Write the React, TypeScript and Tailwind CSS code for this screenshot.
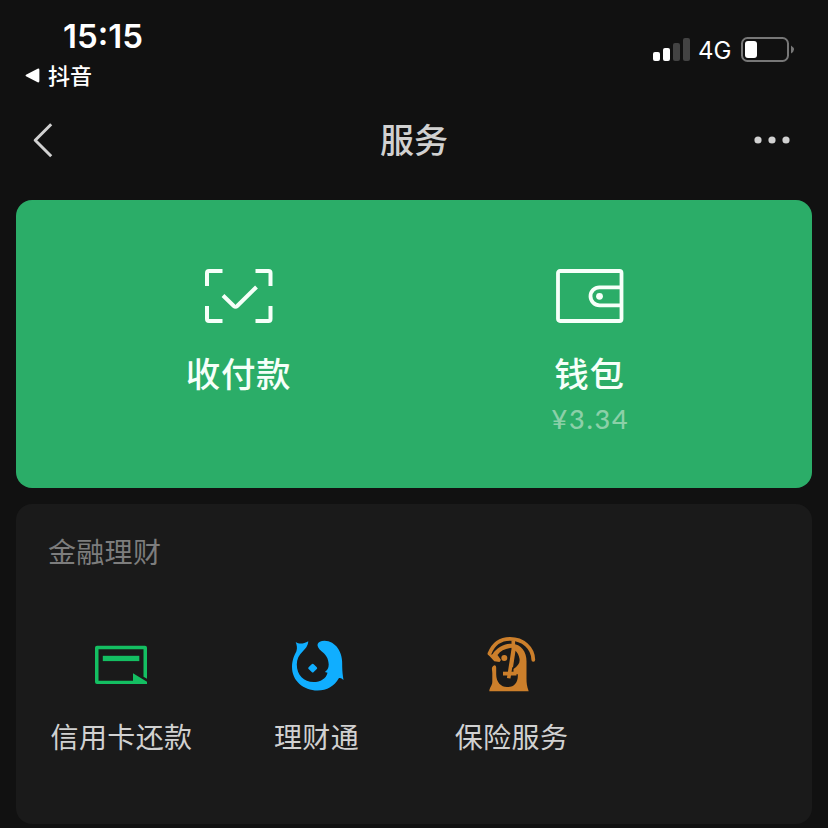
import type { ReactNode } from 'react';

const cjk = "font-['Noto_Sans_CJK_SC',sans-serif]";

function StatusBar() {
  return (
    <div className="flex h-24 items-start justify-between">
      <div className="flex flex-col pl-6 pt-[18px]">
        <span className="flex pl-[39px] font-['Inter',sans-serif] text-[33px] font-semibold leading-9 text-white">
          15<span className="-mt-[3px] mb-[3px]">:</span>15
        </span>
        <div className="mt-[8px] flex h-7 items-center gap-2 pl-[1px]">
          <svg width="15" height="16" viewBox="0 0.5 15 16" fill="#fff">
            <path d="M1 7.2 12.6 1.2Q14.4.6 14.4 2.4V13.6Q14.4 15.4 12.6 14.8L1 8.8Q0 8 1 7.2Z" />
          </svg>
          <span className="-mt-1 text-[22px] font-medium leading-7 text-white">抖音</span>
        </div>
      </div>
      <div className="mt-[36px] flex h-7 items-center pr-[33px]">
        <svg width="38" height="24" viewBox="0 0 38 24">
          <rect x="0" y="14" width="7" height="9" rx="2" fill="#fff" />
          <rect x="10" y="10" width="7" height="13" rx="2" fill="#fff" />
          <rect x="20" y="5" width="7" height="18" rx="2" fill="#434343" />
          <rect x="30" y="0" width="7" height="23" rx="2" fill="#434343" />
        </svg>
        <span className="ml-[7px] mt-0.5 w-[34px] whitespace-nowrap font-['Inter',sans-serif] text-[24px] font-normal leading-7 text-white">
          4G
        </span>
        <svg className="ml-[9px]" width="54" height="26" viewBox="0 0 54 26">
          <rect x="1" y="1" width="46" height="23" rx="5.5" fill="none" stroke="#777" strokeWidth="2" />
          <rect x="4" y="4" width="12" height="17" rx="3" fill="#fff" />
          <path d="M50 8.5Q53 10.5 53 12.5T50 16.5Z" fill="#777" />
        </svg>
      </div>
    </div>
  );
}

function NavBar() {
  return (
    <div className="grid h-[88px] grid-cols-3 items-center text-[#d1d1d1]">
      <svg className="ml-8" width="22" height="36" viewBox="0 0 22 36" fill="none" stroke="currentColor" strokeWidth="3">
        <path d="M19.2 2.2 3.2 18.2 19.2 34.2" strokeLinejoin="round" />
      </svg>
      <h1 className="-mt-[3px] text-center text-[34px] font-medium leading-[48px]">服务</h1>
      <svg className="mr-[37px] justify-self-end" width="38" height="8" viewBox="0 0 38 8" fill="currentColor">
        <circle cx="5" cy="4" r="3.6" />
        <circle cx="19" cy="4" r="3.6" />
        <circle cx="33" cy="4" r="3.6" />
      </svg>
    </div>
  );
}

function PayIcon() {
  return (
    <svg width="68" height="56" viewBox="0.5 0 68 56" fill="none" stroke="#f6fff9" strokeWidth="4">
      <path d="M2.5 18V5Q2.5 3 4.5 3H18M51 3H64Q66 3 66 5V18M66 38V51Q66 53 64 53H51M18 53H4.5Q2.5 53 2.5 51V38" />
      <path d="M18.5 27.5 29.3 38Q31 39.5 32.7 38L52 19" />
    </svg>
  );
}

function WalletIcon() {
  return (
    <svg width="68" height="56" viewBox="0.5 0 68 56" fill="none" stroke="#f6fff9" strokeWidth="3.8">
      <rect x="2.5" y="3" width="63.5" height="50" rx="2" />
      <path d="M65 19.3H44a9 9 0 0 0 0 18H65" />
      <circle cx="44" cy="28.3" r="3.4" fill="#f6fff9" stroke="none" />
    </svg>
  );
}

function CardIcon() {
  return (
    <svg width="56" height="60" viewBox="0.5 0.2 56 60" fill="#14bf62">
      <path fillRule="evenodd" d="M3.5 10H51.5Q53.5 10 53.5 12V43L50 41V13.5H5V45H39.5V37.5L53.5 46V48.3H3.5Q1.5 48.3 1.5 46.3V12Q1.5 10 3.5 10Z" />
      <rect x="9.3" y="20" width="36.5" height="5.3" />
    </svg>
  );
}

function FishIcon() {
  return (
    <svg width="56" height="60" viewBox="0.5 0 56 60" fill="#10aeff">
      <path d="M7.2 6C11 8.6 15 7.8 19.8 5.2C19.5 10 16.8 12.7 14.4 15.3C10.3 19.2 8.3 23.2 8.3 28.5C8.3 39 15.5 46 25 46C32 46 37.8 42.5 39 36.7L36.4 35.9C38.8 34.3 40.2 32 40.2 28.5C40 22 37.2 18.5 33 15.2C26.5 10 28.3 4.8 36 4.8C47 5 54.8 16 53.7 30.5C53.8 35.2 54.2 39.3 55 44C53.2 42 51.7 41.5 50.3 42.2C46 50 38.5 54.5 29 54.5C15 54.5 3.5 45 3.5 31C3.5 24 6 18.8 7.9 15.2C9 12 8.3 9.2 7.2 6Z" />
      <path d="M23.2 28.2Q24.2 27.3 25.2 28.2L28.3 31.2Q29.2 32.1 28.3 33L25.2 36Q24.2 37 23.2 36L20.1 33Q19.2 32.1 20.1 31.2Z" />
    </svg>
  );
}

function InsuranceIcon() {
  return (
    <svg width="56" height="60" viewBox="0.5 -0.3 56 60" fill="none" stroke="#cc7f2b">
      <path d="M6 17.2C9.8 7.5 17 2.5 26.5 2.5C39.5 2.5 49.6 11.5 49.8 23.5" strokeWidth="3.8" strokeLinecap="round" />
      <path
        fill="#cc7f2b"
        stroke="none"
        fillRule="evenodd"
        d="M9 18C13 11.5 20 7.4 28 7.4C38 7.8 43 15.5 43 25V42C43 47 43.4 49.8 45.2 55H5.8C6 51 8.8 49.5 8.8 45.5V37C8.8 33.5 7.5 31.5 9.7 29.6C11.4 28 12.7 29.3 12.7 31.5V38C12.7 46 17.5 50.8 23.5 50.8C31 50.8 34.8 45.8 34.3 38L30 37.8V32.8C34.5 29.5 36.7 26.5 36 22.5C35.4 18.7 33.8 16.2 32 14.5L29.5 31L26.5 30.8L28.7 11.5C22 12 17.3 14.3 14 18.7L17.5 23.6L16 25.6L10.8 25L5 18.8Z"
      />
      <path d="M29.8 4.5V13L25.2 42" strokeWidth="3.6" />
      <path d="M19.5 37.3H33" strokeWidth="3.8" />
      <circle cx="20.8" cy="21.8" r="3" fill="#cc7f2b" stroke="none" />
    </svg>
  );
}

function Service({ icon, label }: { icon: ReactNode; label: string }) {
  return (
    <div className="flex flex-col items-center">
      {icon}
      <span className="mt-[20px] whitespace-nowrap text-[28px] leading-10 tracking-[0.4px] text-[#d1d1d1]">{label}</span>
    </div>
  );
}

export default function App() {
  return (
    <div className={`h-[828px] w-[828px] overflow-hidden bg-[#111111] ${cjk}`}>
      <StatusBar />
      <NavBar />
      <main className="flex flex-col gap-4 px-4 pt-4">
        <section className="grid h-[288px] grid-cols-2 rounded-2xl bg-[#2bad68] px-[47px] pt-[68px] text-[#f6fff9]">
          <div className="flex flex-col items-center">
            <PayIcon />
            <span className="mt-[24px] text-[34.5px] font-medium leading-[48px] tracking-[0.7px]">收付款</span>
          </div>
          <div className="flex flex-col items-center">
            <WalletIcon />
            <span className="mt-[24px] text-[34.5px] font-medium leading-[48px] tracking-[0.7px]">钱包</span>
            <span className="mt-[5px] pl-0.5 font-['Lato',sans-serif] text-[27px] font-medium leading-9 tracking-[1.8px] text-[#8bd0a8]">¥3.34</span>
          </div>
        </section>
        <section className="h-80 rounded-2xl bg-[#1a1a1a] px-2 pt-[27px]">
          <h2 className="pl-6 text-[28px] leading-10 tracking-[0.3px] text-[#7d7d7d]">金融理财</h2>
          <div className="mt-[65px] grid grid-cols-4">
            <Service icon={<CardIcon />} label="信用卡还款" />
            <Service icon={<FishIcon />} label="理财通" />
            <Service icon={<InsuranceIcon />} label="保险服务" />
          </div>
        </section>
      </main>
    </div>
  );
}
